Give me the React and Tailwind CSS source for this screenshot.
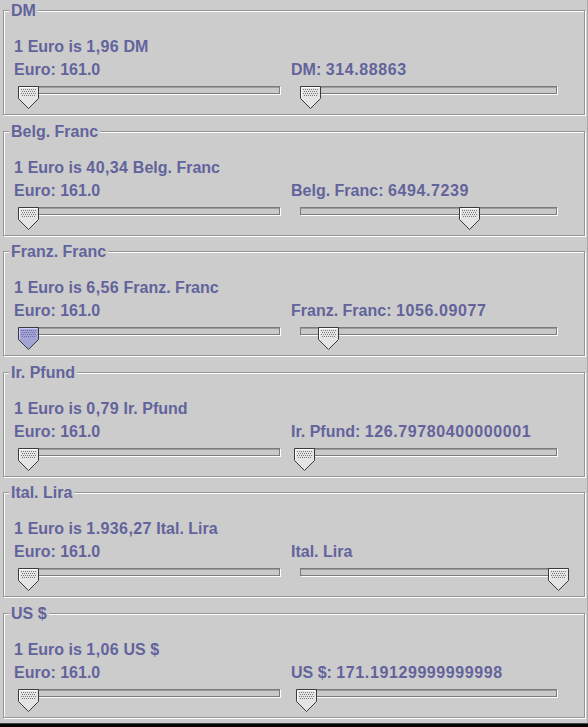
import React from "react";

const rows = [
  { t: "DM", rate: "1,96", r: "DM: ", n: "314.88863", x: 300 },
  { t: "Belg. Franc", rate: "40,34", r: "Belg. Franc: ", n: "6494.7239", x: 459 },
  { t: "Franz. Franc", rate: "6,56", r: "Franz. Franc: ", n: "1056.09077", x: 318, focus: true },
  { t: "Ir. Pfund", rate: "0,79", r: "Ir. Pfund: ", n: "126.79780400000001", x: 294 },
  { t: "Ital. Lira", rate: "1.936,27", r: "Ital. Lira", n: "", x: 548 },
  { t: "US $", rate: "1,06", r: "US $: ", n: "171.19129999999998", x: 296 },
];

function Thumb({ focus }) {
  const fill = focus ? "#a3a3d6" : "#e4e4e4";
  const hi = focus ? "#ccccff" : "#ffffff";
  const dot = focus ? "#6a6aa8" : "#7a7a7a";
  const dots = [];
  for (let y = 3; y <= 9; y += 2) {
    for (let x = 3; x <= 17; x += 2) {
      const xx = x + (((y - 3) / 2) % 2 === 1 ? 1 : 0);
      if (xx <= 17) dots.push(<rect key={`${x}-${y}`} x={xx} y={y} width="1" height="1" fill={dot} />);
    }
  }
  return (
    <svg width="21" height="23" viewBox="0 0 21 23" className="block">
      <path d="M0.5 0.5 H20.5 V12.5 L10.5 22.5 L0.5 12.5 Z" fill={fill} stroke="#3a3a3a" strokeWidth="1" />
      <path d="M1.5 12 V1.5 H19.5" fill="none" stroke={hi} strokeWidth="1" />
      {dots}
    </svg>
  );
}

function Slider({ width, trackLeft, thumbLeft, focus }) {
  return (
    <div className="relative h-[23px]" style={{ width: trackLeft + width + 4 }}>
      <div
        className="mt-[5px] h-[8px] border border-[#7a7a7a] bg-[#c9c9c9] shadow-[inset_0_1px_0_#9c9c9c,1px_1px_0_#ffffff]"
        style={{ marginLeft: trackLeft, width }}
      />
      <div className="absolute top-0" style={{ left: thumbLeft }}>
        <Thumb focus={focus} />
      </div>
    </div>
  );
}

function Panel({ row }) {
  return (
    <div className="pt-[10px] pl-[3px] pr-[2px]">
      <div className="relative h-[105px] border border-[#959595] shadow-[inset_1px_1px_0_#ffffff,1px_1px_0_#ffffff]">
        <div className="absolute top-[-9px] left-[5px] bg-[#cccccc] px-[2px] leading-[18px]">
          {row.t}
        </div>
        <div className="pt-[27px] pl-[10px] leading-[18px]">
          <div>
            <span className="tracking-[0.3px]">1</span> Euro is{" "}
            <span className="tracking-[0.4px]">{row.rate}</span> {row.t}
          </div>
          <div className="mt-[5px] flex">
            <div className="w-[277px] shrink-0">
              <div>Euro: 161.0</div>
            </div>
            <div>
              <div className="whitespace-pre">
                {row.r}
                <span className="tracking-[0.6px]">{row.n}</span>
              </div>
            </div>
          </div>
          <div className="mt-[2px] flex">
            <div className="w-[277px] shrink-0">
              <Slider width={259} trackLeft={7} thumbLeft={4} focus={row.focus} />
            </div>
            <div>
              <Slider width={257} trackLeft={9} thumbLeft={row.x - 291} />
            </div>
          </div>
        </div>
      </div>
    </div>
  );
}

export default function App() {
  return (
    <div
      className="w-[588px] h-[727px] bg-[#cccccc] text-[#63639c] text-[16px] font-bold overflow-hidden flex flex-col"
      style={{ fontFamily: '"Liberation Sans", Arial, sans-serif' }}
    >
      <div className="h-[723px] grid grid-rows-6 border-r border-[#ababab]">
        {rows.map((row) => (
          <Panel key={row.t} row={row} />
        ))}
      </div>
      <div className="h-[4px] border-t border-[#444444] bg-[#050505]" />
    </div>
  );
}
